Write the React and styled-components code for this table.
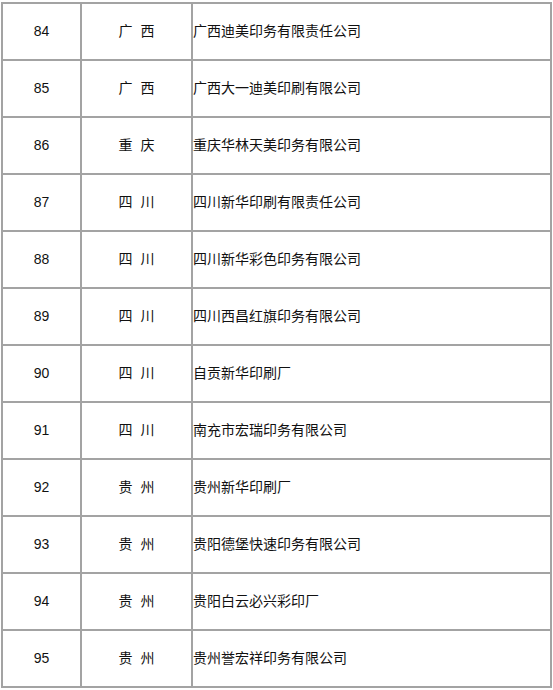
import React from 'react';
import styled, { createGlobalStyle } from 'styled-components';

const GlobalStyle = createGlobalStyle`
  html, body {
    margin: 0;
    padding: 0;
    background: #fff;
  }
`;

const Page = styled.div`
  padding: 2px 0 0 1px;
`;

const Table = styled.table`
  width: 551px;
  border-collapse: collapse;
  table-layout: fixed;
  font-family: "Liberation Sans", "Noto Sans CJK SC", sans-serif;
  font-size: 14px;
  color: #111;
`;

const Row = styled.tr`
  height: 57px;
`;

const Cell = styled.td`
  border: 2px solid #a3a3a3;
  padding: 0 0 1px;
  text-align: ${(p) => p.$align || 'center'};
  vertical-align: middle;
  line-height: 16px;
  white-space: nowrap;
  word-spacing: ${(p) => p.$spread || 0}px;
`;

const rows = [
  [84, '广 西', '广西迪美印务有限责任公司'],
  [85, '广 西', '广西大一迪美印刷有限公司'],
  [86, '重 庆', '重庆华林天美印务有限公司'],
  [87, '四 川', '四川新华印刷有限责任公司'],
  [88, '四 川', '四川新华彩色印务有限公司'],
  [89, '四 川', '四川西昌红旗印务有限公司'],
  [90, '四 川', '自贡新华印刷厂'],
  [91, '四 川', '南充市宏瑞印务有限公司'],
  [92, '贵 州', '贵州新华印刷厂'],
  [93, '贵 州', '贵阳德堡快速印务有限公司'],
  [94, '贵 州', '贵阳白云必兴彩印厂'],
  [95, '贵 州', '贵州誉宏祥印务有限公司'],
];

export default function App() {
  return (
    <>
      <GlobalStyle />
      <Page>
        <Table>
          <colgroup>
            <col style={{ width: 79 }} />
            <col style={{ width: 111 }} />
            <col />
          </colgroup>
          <tbody>
            {rows.map(([no, region, name]) => (
              <Row key={no}>
                <Cell>{no}</Cell>
                <Cell $spread={4}>{region}</Cell>
                <Cell $align="left">{name}</Cell>
              </Row>
            ))}
          </tbody>
        </Table>
      </Page>
    </>
  );
}
